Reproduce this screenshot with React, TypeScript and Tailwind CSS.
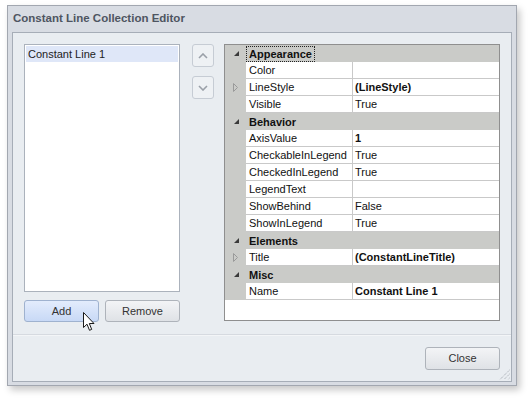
import React from 'react';

type Row =
  | { kind: 'cat'; label: string; focus?: boolean }
  | { kind: 'prop'; label: string; value: string; bold?: boolean; expandable?: boolean };

const rows: Row[] = [
  { kind: 'cat', label: 'Appearance', focus: true },
  { kind: 'prop', label: 'Color', value: '' },
  { kind: 'prop', label: 'LineStyle', value: '(LineStyle)', bold: true, expandable: true },
  { kind: 'prop', label: 'Visible', value: 'True' },
  { kind: 'cat', label: 'Behavior' },
  { kind: 'prop', label: 'AxisValue', value: '1', bold: true },
  { kind: 'prop', label: 'CheckableInLegend', value: 'True' },
  { kind: 'prop', label: 'CheckedInLegend', value: 'True' },
  { kind: 'prop', label: 'LegendText', value: '' },
  { kind: 'prop', label: 'ShowBehind', value: 'False' },
  { kind: 'prop', label: 'ShowInLegend', value: 'True' },
  { kind: 'cat', label: 'Elements' },
  { kind: 'prop', label: 'Title', value: '(ConstantLineTitle)', bold: true, expandable: true },
  { kind: 'cat', label: 'Misc' },
  { kind: 'prop', label: 'Name', value: 'Constant Line 1', bold: true },
];

const ExpandedGlyph = () => (
  <svg width="5" height="5" viewBox="0 0 5 5" className="block">
    <polygon points="5,0 5,5 0,5" fill="#3a3a3a" />
  </svg>
);

const CollapsedGlyph = () => (
  <svg width="5" height="9" viewBox="0 0 5 9" className="block">
    <polygon points="0.5,0.5 4.5,4.5 0.5,8.5" fill="none" stroke="#9a9a9a" strokeWidth="1" />
  </svg>
);

function PropertyGrid() {
  return (
    <div className="ml-[10px] flex h-[277px] w-[276px] flex-col border border-[#8f8f8f] bg-white">
      {rows.map((row) =>
        row.kind === 'cat' ? (
          <div key={row.label} className="flex h-[17px] items-center bg-[#cacbc8]">
            <div className="flex w-[21px] items-center justify-center pl-[2px]">
              <ExpandedGlyph />
            </div>
            <span
              className={`ml-[1px] px-[2px] leading-[14px] font-bold text-[#111] ${
                row.focus ? 'outline outline-1 outline-dotted outline-[#222]' : ''
              }`}
            >
              {row.label}
            </span>
          </div>
        ) : (
          <div key={row.label} className="flex h-[17px]">
            <div className="flex w-[21px] items-center justify-center bg-[#cacbc8]">
              {row.expandable && <CollapsedGlyph />}
            </div>
            <div className="flex w-[107px] items-center border-r border-b border-[#c9c9c9] pl-[3px] text-[#111]">
              {row.label}
            </div>
            <div
              className={`flex flex-1 items-center border-b border-[#c9c9c9] pl-[2px] text-[#111] ${
                row.bold ? 'font-bold' : ''
              }`}
            >
              {row.value}
            </div>
          </div>
        ),
      )}
    </div>
  );
}

const ArrowButton = ({ up }: { up?: boolean }) => (
  <div className="flex h-[23px] w-[22px] items-center justify-center rounded-[3px] border border-[#c6ccd4] bg-[#eef1f4]">
    <svg width="10" height="6" viewBox="0 0 10 6">
      <polyline
        points={up ? '1,5 5,1 9,5' : '1,1 5,5 9,1'}
        fill="none"
        stroke="#9aa0a8"
        strokeWidth="1.6"
      />
    </svg>
  </div>
);

export default function App() {
  return (
    <div className="relative h-[402px] w-[530px] overflow-hidden bg-white pl-[7px] pt-[5px] font-['Liberation_Sans',Arial,sans-serif] text-[11px]">
      <div className="flex h-[381px] w-[510px] flex-col border border-[#a2a7b0] bg-[#d8dce3] px-[4px] pb-[3px] shadow-[3px_4px_7px_rgba(0,0,0,0.22)]">
        <div className="flex h-[26px] shrink-0 items-center pl-[1px] text-[11.5px] font-bold text-[#4e5561]">
          Constant Line Collection Editor
        </div>

        <div className="relative flex flex-1 flex-col border border-[#a6adb7] bg-[#e9edf1]">
          <div className="flex pl-[11px] pt-[11px]">
            <div className="flex w-[156px] flex-col">
              <div className="h-[248px] border border-[#abb2bc] bg-white p-[1px]">
                <div className="flex h-[16px] items-center bg-[#dfe7f8] pl-[2px] text-[#222]">
                  Constant Line 1
                </div>
              </div>
              <div className="mt-[8px] flex gap-[6px]">
                <button className="flex h-[22px] w-[75px] items-center justify-center rounded-[3px] border border-[#9fb2cf] bg-gradient-to-b from-[#e3ecfc] to-[#c8d9f6] text-[#333]">
                  Add
                </button>
                <button className="flex h-[22px] w-[75px] items-center justify-center rounded-[3px] border border-[#aeb3ba] bg-gradient-to-b from-[#f3f4f6] to-[#dfe2e6] text-[#333]">
                  Remove
                </button>
              </div>
            </div>

            <div className="ml-[12px] flex flex-col gap-[9px]">
              <ArrowButton up />
              <ArrowButton />
            </div>

            <PropertyGrid />
          </div>

          <div className="mt-[12px] h-[2px] border-t border-[#d6dae0] bg-[#f3f5f7]" />

          <div className="flex justify-end pr-[11px] pt-[11px]">
            <button className="flex h-[23px] w-[75px] items-center justify-center rounded-[3px] border border-[#aeb3ba] bg-gradient-to-b from-[#f3f4f6] to-[#dfe2e6] text-[#333]">
              Close
            </button>
          </div>

          <svg width="11" height="11" viewBox="0 0 11 11" className="absolute bottom-[1px] right-[1px]">
            <g stroke="#9ba1a9" strokeWidth="1" strokeDasharray="1 1">
              <line x1="10.5" y1="1" x2="1" y2="10.5" />
              <line x1="10.5" y1="5" x2="5" y2="10.5" />
              <line x1="10.5" y1="9" x2="9" y2="10.5" />
            </g>
          </svg>
        </div>
      </div>

      <svg
        width="13"
        height="20"
        viewBox="0 0 13 20"
        className="absolute left-[83px] top-[312px]"
      >
        <path
          d="M0.5 0.5 L0.5 15.5 L4 12.2 L6.5 18.3 L8.7 17.4 L6.3 11.5 L11 11.5 Z"
          fill="white"
          stroke="#1a1a1a"
          strokeWidth="1"
          strokeLinejoin="round"
        />
      </svg>
    </div>
  );
}
